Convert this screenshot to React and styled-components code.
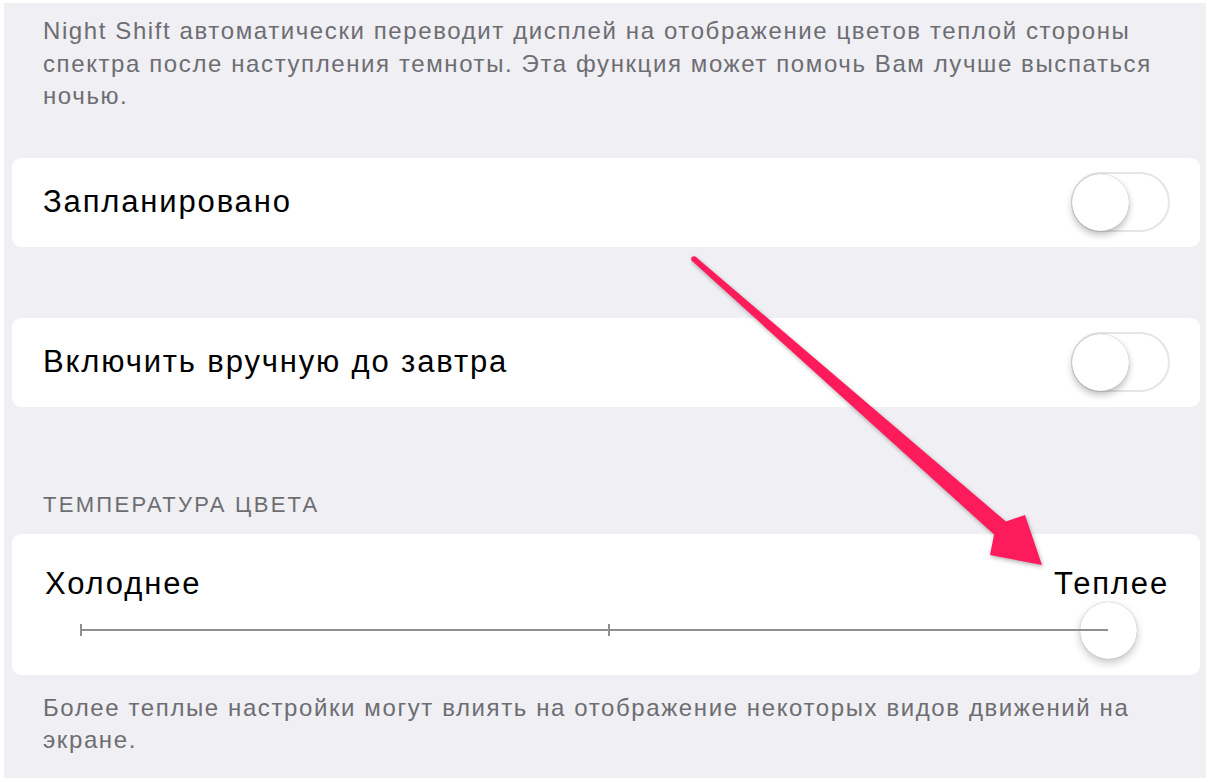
import React from 'react'
import styled, { createGlobalStyle } from 'styled-components'

const GlobalStyle = createGlobalStyle`
    html, body {
        margin: 0;
        padding: 0;
        background: #ffffff;
    }
    body {
        font-family: "Liberation Sans", Arial, sans-serif;
        -webkit-font-smoothing: antialiased;
    }
`

function Arrow() {
    return (
        <ArrowLayer width="1214" height="782" viewBox="0 0 1214 782">
            <polygon
                points="695.9,256.9 1005.9,521.5 1025,515 1042,565 990,555 994.1,534.5 692.1,261.1"
                fill="#fe1b5b"
            />
            <circle cx="694" cy="259" r="2.8" fill="#fe1b5b" />
        </ArrowLayer>
    )
}

function Toggle() {
    return (
        <Switch>
            <Knob />
        </Switch>
    )
}

function App() {
    return (
        <>
            <GlobalStyle />
            <Page>
                <Note>
                    Night Shift автоматически переводит дисплей на отображение цветов теплой стороны
                    спектра после наступления темноты. Эта функция может помочь Вам лучше выспаться
                    ночью.
                </Note>

                <Card>
                    <Label>Запланировано</Label>
                    <Toggle />
                </Card>

                <Card $top={71}>
                    <Label>Включить вручную до завтра</Label>
                    <Toggle />
                </Card>

                <SectionHeader>ТЕМПЕРАТУРА ЦВЕТА</SectionHeader>

                <SliderCard>
                    <Ends>
                        <Label>Холоднее</Label>
                        <Label>Теплее</Label>
                    </Ends>
                    <SliderRow>
                        <Track>
                            <Tick $at={0} />
                            <Tick $at={51.4} />
                        </Track>
                        <Thumb />
                    </SliderRow>
                </SliderCard>

                <Note $top={17}>
                    Более теплые настройки могут влиять на отображение некоторых видов движений на
                    экране.
                </Note>

                <Arrow />
            </Page>
        </>
    )
}

export default App

const Page = styled.div`
    position: relative;
    margin: 3px 8px 0 4px;
    height: 775px;
    box-sizing: border-box;
    padding: 12px 6px 0 8px;
    background: #efeff4;
    display: flex;
    flex-direction: column;
`

const Note = styled.p`
    margin: ${p => p.$top || 0}px 0 0;
    padding: 0 30px 0 31px;
    font-size: 24px;
    line-height: 32.5px;
    letter-spacing: 1.6px;
    color: #6d6d72;
`

const Card = styled.div`
    margin-top: ${p => p.$top || 45}px;
    height: 89px;
    box-sizing: border-box;
    padding: 0 30px 0 31px;
    background: #ffffff;
    border-radius: 9px;
    display: flex;
    align-items: center;
    justify-content: space-between;
`

const Label = styled.span`
    font-size: 31px;
    letter-spacing: 1.85px;
    color: #000000;
`

const Switch = styled.div`
    width: 99px;
    height: 60px;
    box-sizing: border-box;
    border: 2px solid #e5e5ea;
    border-radius: 30px;
    background: #ffffff;
    display: flex;
    align-items: center;
`

const Knob = styled.div`
    width: 57px;
    height: 57px;
    margin-left: -1px;
    border-radius: 50%;
    background: #ffffff;
    box-shadow: 0 4px 7px rgba(0, 0, 0, 0.25), 0 0 1px rgba(0, 0, 0, 0.35);
`

const SectionHeader = styled.div`
    margin-top: 86px;
    padding-left: 31px;
    font-size: 22px;
    line-height: 24px;
    color: #6d6d72;
    letter-spacing: 2.3px;
`

const SliderCard = styled.div`
    margin-top: 17px;
    height: 141px;
    box-sizing: border-box;
    padding: 33px 0 0;
    background: #ffffff;
    border-radius: 9px;
`

const Ends = styled.div`
    display: flex;
    justify-content: space-between;
    padding: 0 31px 0 33px;
    line-height: 34px;
`

const SliderRow = styled.div`
    display: flex;
    align-items: center;
    margin: 1px 63px 0 68px;
    height: 57px;
`

const Track = styled.div`
    position: relative;
    flex: 1;
    height: 2px;
    background: #8e8e93;
`

const Tick = styled.span`
    position: absolute;
    left: ${p => p.$at}%;
    top: -5px;
    width: 2px;
    height: 12px;
    background: #8e8e93;
`

const Thumb = styled.div`
    width: 57px;
    height: 57px;
    margin-left: -28px;
    border-radius: 50%;
    background: #ffffff;
    box-shadow: 0 4px 8px rgba(0, 0, 0, 0.22), 0 0 1px rgba(0, 0, 0, 0.4);
`

const ArrowLayer = styled.svg`
    position: absolute;
    top: -3px;
    left: -4px;
    pointer-events: none;
    filter: drop-shadow(1px 2px 2px rgba(0, 0, 0, 0.3));
`
